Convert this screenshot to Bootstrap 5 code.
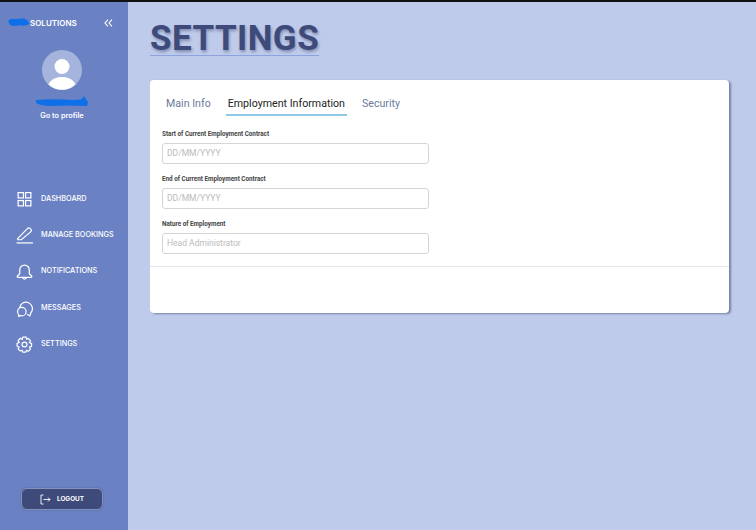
<!DOCTYPE html>
<html lang="en"><head><meta charset="utf-8"><title>Settings</title>
<link href="https://cdn.jsdelivr.net/npm/bootstrap@5.3.0/dist/css/bootstrap.min.css" rel="stylesheet">
<style>
html,body{height:100%;overflow:hidden}
body{background:#bfcbeb;font-family:Roboto,sans-serif;border-top:2px solid #111}
.shell{height:528px}
.side{width:128px;background:#6a82c4;color:#fff;font-family:Inter,sans-serif;flex:none}
.brand{height:41px;padding:0 15px 0 8px;font-size:8px;font-weight:600;margin-bottom:7px}
.brand svg.sq{margin-right:1px}
.avatar{width:40px;height:40px;display:block;margin:0 0 0 42px}
.scrib{display:block;margin:6px 0 0 35px}
.goto{font-size:7.3px;font-weight:600;text-align:center;margin-top:3px;height:9px;line-height:9px;padding-right:4px}
.menu{margin-top:61px}
.mitem{height:36.3px;padding-left:16px;gap:8px;font-size:7.3px;font-weight:500;color:#fff;text-decoration:none}
.mitem svg{flex:none}
.logout-btn{width:82px;height:22px;background:#3d4a7a;border:1px solid #8592bd;border-radius:6px;color:#fff;font-size:6.4px;font-weight:700;gap:6px;padding:1px 0 0;box-shadow:0 0 2px rgba(40,50,90,.4)}
.logout-btn:hover{background:#3d4a7a;color:#fff}
.foot{margin-top:auto;padding:0 4px 20px 0}
.main-pane{padding:15px 27px 0 22px}
.pg-title{font-family:Roboto,sans-serif;font-size:35px;font-weight:700;color:#3d4a7a;letter-spacing:.45px;line-height:44px;margin:0;text-shadow:1px 2px 3px rgba(40,50,90,.4);border-bottom:1px solid #8ea3dd;display:inline-block;height:39px}
.sheet{margin-top:23px;height:233px;border:0;border-radius:4px;box-shadow:2px 1px 2px rgba(50,60,100,.5)}
.tabbar{padding:10px 14px 0;gap:13px;border:0}
.tabbar .nav-link{font-size:10.65px;color:#6c7a9c;padding:7px 2px 4px;line-height:13px;border:0;border-bottom:2px solid transparent;border-radius:0;background:none}
.tabbar .nav-link.active{color:#222;border-bottom-color:#8ecae6}
.formz{padding:14px 12px 0}
.fgroup{margin-bottom:11.500px;width:267px}
.fgroup label{font-size:6.3px;font-weight:700;color:#444;display:block;line-height:8px;margin-bottom:4.500px}
.fgroup .form-control{height:21px;padding:0 4px;font-size:8.500px;border:1px solid #d3d5da;border-radius:3px;min-height:0}
.fgroup .form-control::placeholder{color:#bbb}
.sep{border-top:1px solid #e3e6ec;margin-top:1px}
</style></head><body>
<div class="d-flex shell">
<aside class="side d-flex flex-column">
  <div class="brand d-flex align-items-center">
    <svg class="sq" width="21" height="9" viewBox="0 0 21 9"><path d="M0 3 Q3 0 7 1 L16 .5 Q21 2 21 6 Q17 9 12 7 Q6 9 2 7 Z" fill="#0f6fe8"/></svg>
    <span>SOLUTIONS</span>
    <svg class="ms-auto" width="9" height="8" viewBox="0 0 9 8" fill="none" stroke="#fff" stroke-width="1.100"><path d="M4 .7 1 4l3 3.300M8 .7 5 4l3 3.300"/></svg>
  </div>
  <svg class="avatar" viewBox="0 0 40 40"><circle cx="20" cy="20" r="20" fill="#a5b4dc"/><circle cx="20" cy="16.500" r="7.500" fill="#fff"/><path d="M6.500 34.500C9 29 14 27 20 27s11 2 13.500 7.500A20 20 0 0 1 6.500 34.500Z" fill="#fff"/></svg>
  <svg class="scrib" width="54" height="12" viewBox="0 0 54 12"><path d="M1 4 Q18 2.500 38 4 L46 3.500 L49 0 L53 6 L52 10 Q30 9 16 10 Q6 10 1 7 Z" fill="#0f6fe8"/></svg>
  <div class="goto">Go to profile</div>
  <nav class="menu">
    <a class="mitem d-flex align-items-center" href="#"><svg width="17" height="17" viewBox="0 0 16 16" fill="none" stroke="#fff" stroke-width="1.150"><rect x="2" y="1.500" width="5" height="5"/><rect x="9" y="1.500" width="5" height="5"/><rect x="2" y="9" width="5" height="5"/><rect x="9" y="9" width="5" height="5"/></svg>DASHBOARD</a>
    <a class="mitem d-flex align-items-center" href="#"><svg width="17" height="17" viewBox="0 0 16 16" fill="none" stroke="#fff" stroke-width="1.150"><path d="M1.500 11 10.500 1.800a2 2 0 0 1 3.300 2.800L5 12H1.700Z"/><path d="M.5 15H16"/></svg>MANAGE BOOKINGS</a>
    <a class="mitem d-flex align-items-center" href="#"><svg width="17" height="17" viewBox="0 0 16 16" fill="none" stroke="#fff" stroke-width="1.150"><path d="M3.500 10V6.500a4.500 4.500 0 0 1 9 0V10l2.200 2.200c.500.800 0 1.300-.700 1.300H2c-.700 0-1.200-.500-.700-1.300Z"/><path d="M6.300 13.500a1.700 1.700 0 0 0 3.400 0"/></svg>NOTIFICATIONS</a>
    <a class="mitem d-flex align-items-center" href="#"><svg width="17" height="17" viewBox="0 0 16 16" fill="none" stroke="#fff" stroke-width="1.150"><path d="M3.500 7.500A6 6 0 1 1 14 12L13 15 10.500 13.500"/><circle cx="5.500" cy="11" r="4"/><path d="M2.500 14V15.500L4.500 14.500"/></svg>MESSAGES</a>
    <a class="mitem d-flex align-items-center" href="#"><svg width="17" height="17" viewBox="0 0 16 16" fill="none" stroke="#fff" stroke-width="1.150"><circle cx="8" cy="8" r="2.300"/><path d="M6.500 1h3l.5 2 1.700-.7 2 2.200-1 1.700 2 1-.1 2.600-1.900.7.900 1.800-2 2.100-1.700-.9-.7 1.700H6.400l-.6-1.800-1.800.8-2-2 .9-1.800-1.900-.8V6.900l2-.8-1-1.800 2-2.100 1.800.9Z"/></svg>SETTINGS</a>
  </nav>
  <div class="foot d-flex justify-content-center">
    <button class="btn logout-btn d-flex align-items-center justify-content-center" type="button"><svg width="11" height="11" viewBox="0 0 11 11" fill="none" stroke="#fff" stroke-width=".9"><path d="M3.500 1H1v9h2.500M3.500 5.500h6.500M8 3.500l2 2-2 2"/></svg>LOGOUT</button>
  </div>
</aside>
<main class="main-pane flex-grow-1">
  <h1 class="pg-title">SETTINGS</h1>
  <div class="card sheet">
    <ul class="nav tabbar">
      <li class="nav-item"><a class="nav-link" href="#">Main Info</a></li>
      <li class="nav-item"><a class="nav-link active" href="#">Employment Information</a></li>
      <li class="nav-item"><a class="nav-link" href="#">Security</a></li>
    </ul>
    <form class="formz">
      <div class="fgroup"><label for="a">Start of Current Employment Contract</label><input id="a" class="form-control" placeholder="DD/MM/YYYY"></div>
      <div class="fgroup"><label for="b">End of Current Employment Contract</label><input id="b" class="form-control" placeholder="DD/MM/YYYY"></div>
      <div class="fgroup"><label for="c">Nature of Employment</label><input id="c" class="form-control" placeholder="Head Administrator"></div>
    </form>
    <div class="sep"></div>
  </div>
</main>
</div>
<script src="https://cdn.jsdelivr.net/npm/bootstrap@5.3.0/dist/js/bootstrap.bundle.min.js"></script>
</body></html>
